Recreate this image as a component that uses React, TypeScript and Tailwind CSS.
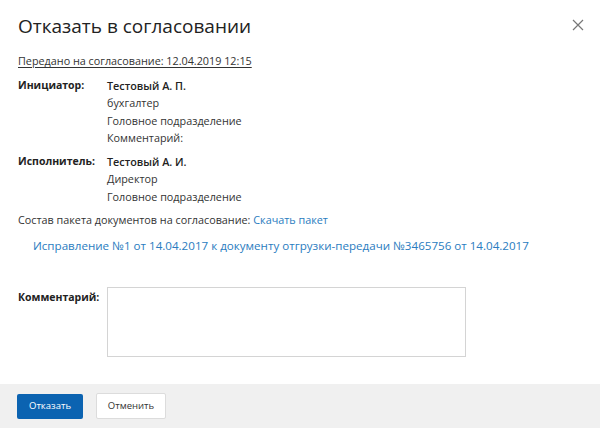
import React from 'react';

const font = { fontFamily: '"Open Sans", "Noto Sans", sans-serif' };

const Row: React.FC<{ label: string; lines: string[] }> = ({ label, lines }) => (
  <div className="flex">
    <div className="w-[89px] shrink-0 font-bold text-[10.5px] text-[#222]">{label}</div>
    <div className="flex flex-col">
      {lines.map((l, i) => (
        <div key={i} className={i === 0 ? 'font-semibold text-[#222]' : 'text-[#333]'}>
          {l}
        </div>
      ))}
    </div>
  </div>
);

export default function App() {
  return (
    <div className="w-[600px] h-[428px] bg-white flex flex-col text-[10.8px] leading-[17.5px] text-[#333]" style={font}>
      <div className="flex-1 px-[18px] pt-[13px] relative">
        <button className="absolute right-[16px] top-[19px] text-[#777]">
          <svg width="12" height="12" viewBox="0 0 12 12" stroke="currentColor" strokeWidth="1.2">
            <path d="M1 1L11 11M11 1L1 11" />
          </svg>
        </button>
        <h1 className="text-[19px] leading-[26px] text-[#222] font-normal">Отказать в согласовании</h1>
        <div className="mt-[13px] underline underline-offset-2 text-[#333]">Передано на согласование: 12.04.2019 12:15</div>
        <div className="mt-[7px] flex flex-col gap-[6px]">
          <Row label="Инициатор:" lines={['Тестовый А. П.', 'бухгалтер', 'Головное подразделение', 'Комментарий:']} />
          <Row label="Исполнитель:" lines={['Тестовый А. И.', 'Директор', 'Головное подразделение']} />
        </div>
        <div className="mt-[6px]">
          Состав пакета документов на согласование: <span className="text-[#2a7cc0]">Скачать пакет</span>
        </div>
        <div className="mt-[8px] pl-[15px] text-[11.6px] text-[#2a7cc0] whitespace-nowrap">
          Исправление №1 от 14.04.2017 к документу отгрузки-передачи №3465756 от 14.04.2017
        </div>
        <div className="mt-[33px] flex">
          <div className="w-[89px] shrink-0 font-bold text-[10.5px] text-[#222] pt-[2px]">Комментарий:</div>
          <textarea className="w-[359px] h-[70px] border border-[#d4d4d4] resize-none outline-none" />
        </div>
      </div>
      <div className="h-[44px] bg-[#f0f0f0] flex items-center gap-[13px] px-[17px]">
        <button className="w-[66px] h-[25px] rounded-[2px] bg-[#0b63b1] text-white text-[9.5px]">Отказать</button>
        <button className="w-[70px] h-[26px] rounded-[2px] bg-white border border-[#dcdcdc] text-[#333] text-[9.5px]">Отменить</button>
      </div>
    </div>
  );
}
